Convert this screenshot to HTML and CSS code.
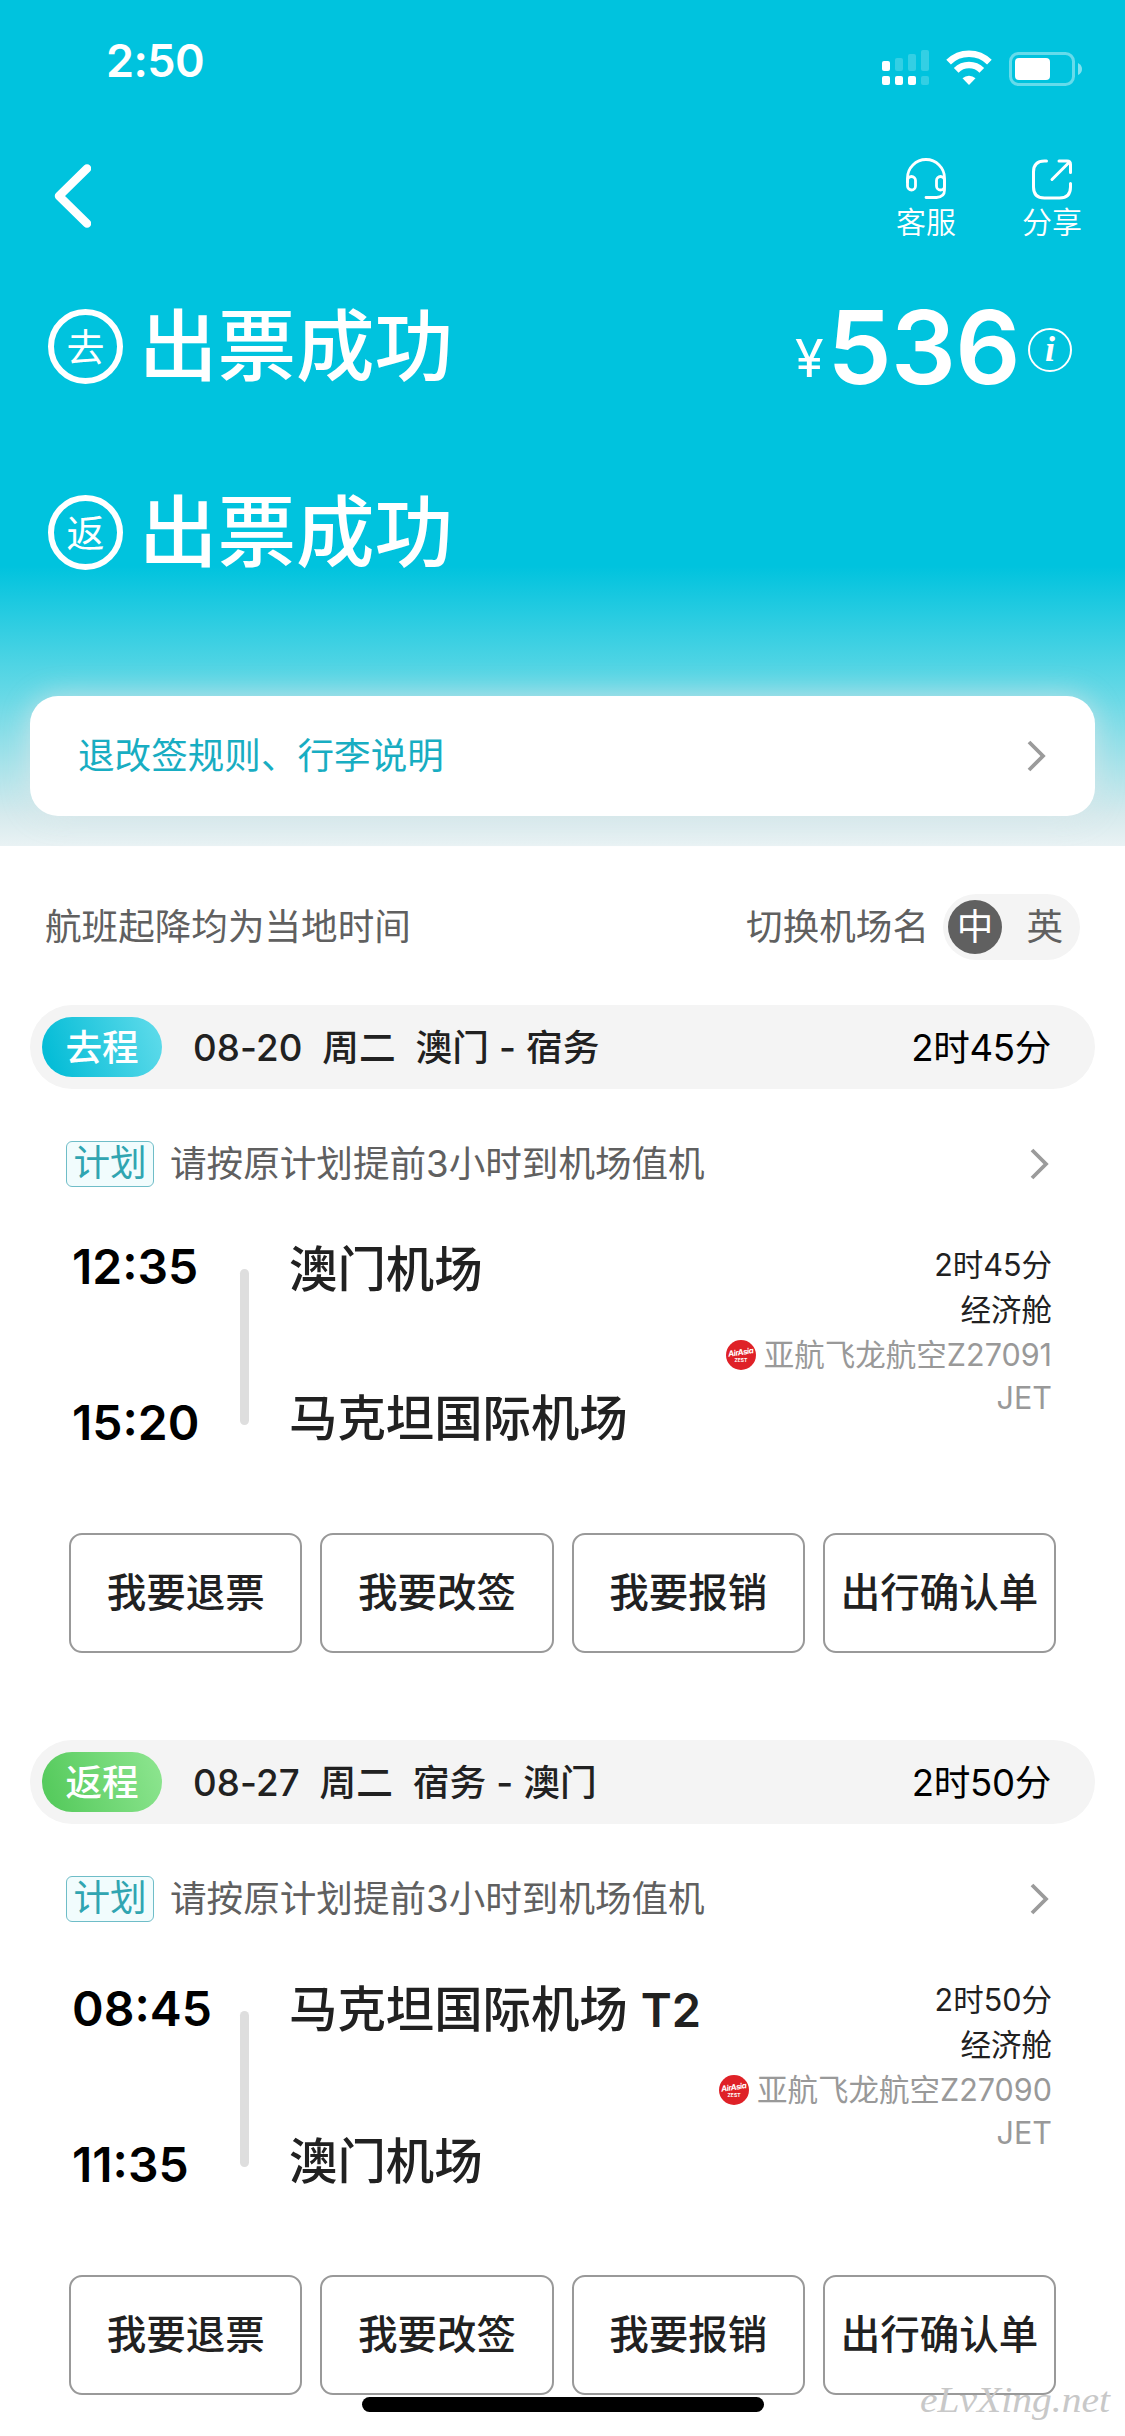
FILE: index.html
```html
<!DOCTYPE html>
<html lang="zh-CN">
<head>
<meta charset="utf-8">
<title>订单详情</title>
<link rel="stylesheet" href="styles.css">
</head>
<body>
<header class="hero">
  <div class="status">
    <span class="clock">2:50</span>
    <svg class="status-icons" width="201" height="36" viewBox="0 0 201 36" fill="#fff">
      <rect x="0" y="11" width="8" height="10" rx="2"/>
      <g opacity=".2"><rect x="13" y="8" width="8" height="13" rx="2"/><rect x="26" y="4" width="8" height="17" rx="2"/><rect x="39" y="0" width="8" height="21" rx="2"/><rect x="39" y="26" width="8" height="9" rx="2"/></g>
      <rect x="0" y="26" width="8" height="9" rx="2"/><rect x="13" y="26" width="8" height="9" rx="2"/><rect x="26" y="26" width="8" height="9" rx="2"/>
      <g fill="none" stroke="#fff" stroke-width="6.6"><path d="M66.6 12.2a29 29 0 0 1 40.8 0"/><path d="M74.2 20.4a18 18 0 0 1 25.6 0"/></g>
      <path d="M80.5 28.3a9.5 9.5 0 0 1 13 0L87 35z"/>
      <rect x="128.5" y="3.5" width="63" height="31" rx="8" fill="none" stroke="#fff" stroke-width="3" opacity=".4"/>
      <rect x="133" y="8" width="35" height="22" rx="4"/>
      <path d="M196 13q4 2 4 6t-4 6z" opacity=".5"/>
    </svg>
  </div>
  <nav class="nav">
    <svg class="back" width="40" height="66" viewBox="0 0 40 66"><path d="M36 5.5 8 33 36 60.5" fill="none" stroke="#fff" stroke-width="8.5" stroke-linecap="round" stroke-linejoin="round"/></svg>
    <div class="tools">
      <div class="tool">
        <svg width="42" height="42" viewBox="0 0 42 42" fill="none" stroke="#fff" stroke-width="2.8" stroke-linecap="round"><path d="M2.5 24V20a18.5 18.5 0 0 1 37 0v12q0 7-8 7.500H21"/><rect x="2.500" y="18.500" width="8" height="13.500" rx="4"/><rect x="31.500" y="18.500" width="8" height="13.500" rx="4"/></svg>
        <span>客服</span>
      </div>
      <div class="tool">
        <svg width="42" height="42" viewBox="0 0 42 42" fill="none" stroke="#fff" stroke-width="3" stroke-linecap="round" stroke-linejoin="round"><path d="M15.5 3h-2Q2.500 3 2.500 14v15q0 11 11 11h15q11 0 11-11v-3.500"/><path d="M21 21.500 38 4.500M28 3h8q3.500 0 3.500 3.500v8"/></svg>
        <span>分享</span>
      </div>
    </div>
  </nav>
  <div class="result">
    <span class="ring">去</span><h1>出票成功</h1>
    <div class="price"><span class="yen">¥</span><span class="amount">536</span><span class="info">i</span></div>
  </div>
  <div class="result"><span class="ring">返</span><h1>出票成功</h1></div>
  <a class="rules"><span>退改签规则、行李说明</span><svg class="chevron" viewBox="0 0 20 32"><path d="M2 2 16 16 2 30"/></svg></a>
</header>
<main>
  <div class="note">
    <span>航班起降均为当地时间</span>
    <span class="switch-label">切换机场名</span>
    <div class="switch"><b>中</b><span>英</span></div>
  </div>
  <section class="leg">
    <div class="leg-bar"><span class="pill out">去程</span><span class="route">08-20&nbsp; 周二&nbsp; 澳门 - 宿务</span><span class="total">2时45分</span></div>
    <div class="plan"><span class="tag">计划</span><span>请按原计划提前3小时到机场值机</span><svg class="chevron" viewBox="0 0 20 32"><path d="M2 2 16 16 2 30"/></svg></div>
    <div class="trip">
      <div class="times"><span>12:35</span><span>15:20</span></div>
      <i class="line"></i>
      <div class="airports"><span>澳门机场</span><span>马克坦国际机场</span></div>
      <div class="detail"><span>2时45分</span><span>经济舱</span>
        <span class="flight"><span class="airline"><span class="brand">AirAsia</span><span class="sub">ZEST</span></span>亚航飞龙航空Z27091</span>
        <span class="jet">JET</span></div>
    </div>
    <div class="actions"><button>我要退票</button><button>我要改签</button><button>我要报销</button><button>出行确认单</button></div>
  </section>
  <section class="leg return">
    <div class="leg-bar"><span class="pill back-pill">返程</span><span class="route">08-27&nbsp; 周二&nbsp; 宿务 - 澳门</span><span class="total">2时50分</span></div>
    <div class="plan"><span class="tag">计划</span><span>请按原计划提前3小时到机场值机</span><svg class="chevron" viewBox="0 0 20 32"><path d="M2 2 16 16 2 30"/></svg></div>
    <div class="trip">
      <div class="times"><span>08:45</span><span>11:35</span></div>
      <i class="line"></i>
      <div class="airports"><span>马克坦国际机场 <b>T2</b></span><span>澳门机场</span></div>
      <div class="detail"><span>2时50分</span><span>经济舱</span>
        <span class="flight"><span class="airline"><span class="brand">AirAsia</span><span class="sub">ZEST</span></span>亚航飞龙航空Z27090</span>
        <span class="jet">JET</span></div>
    </div>
    <div class="actions"><button>我要退票</button><button>我要改签</button><button>我要报销</button><button>出行确认单</button></div>
  </section>
</main>
<div class="home-indicator"></div>
<svg class="watermark" width="210" height="60" viewBox="0 0 210 60"><text x="5" y="38" textLength="190" lengthAdjust="spacingAndGlyphs">eLvXing.net</text></svg>
</body>
</html>
```
FILE: styles.css
```css
* { box-sizing: border-box; }
body {
  margin: 0;
  width: 1125px;
  height: 2436px;
  position: relative;
  overflow: hidden;
  background: #fff;
  color: #212121;
  font-family: Inter, "Noto Sans CJK SC", sans-serif;
  font-size: 36.6px;
  line-height: 1;
  white-space: nowrap;
}
svg { display: block; flex: none; }
.chevron {
  width: 20px;
  height: 32px;
  fill: none;
  stroke: #9b9b9b;
  stroke-width: 3.8;
}

/* header */
.hero {
  height: 846px;
  padding-top: 32px;
  color: #fff;
  background: linear-gradient(#00c3de 0, #00c3de 566px, #4fd4e4 665px, #6ad9e6 700px, #d6eaed 815px, #e9f2f4 846px);
}
.status {
  height: 68px;
  padding: 0 42px 0 106px;
  display: flex;
  justify-content: space-between;
}
.clock { font-size: 45px; font-weight: 600; line-height: 58px; letter-spacing: -.6px; }
.status-icons { margin-top: 18px; }
.nav {
  height: 166px;
  padding: 58px 43px 0 51px;
  display: flex;
  justify-content: space-between;
}
.back { margin-top: 5px; }
.tools { display: flex; gap: 66px; }
.tool {
  width: 60px;
  display: flex;
  flex-direction: column;
  align-items: center;
  font-size: 30px;
  font-weight: 350;
}
.tool span { line-height: 44px; }
.result {
  height: 161px;
  padding-left: 48px;
  display: flex;
  align-items: center;
}
.result + .result { margin-top: 25px; }
.ring {
  width: 75px;
  height: 75px;
  border: 6px solid #fff;
  border-radius: 50%;
  display: flex;
  align-items: center;
  justify-content: center;
  font-size: 38px;
}
h1 { margin: 1px 0 0 16px; font-size: 78.5px; font-weight: 500; line-height: 100px; }
.price {
  margin-left: auto;
  padding-right: 53px;
  display: flex;
  align-items: baseline;
}
.yen { position: relative; top: -7px; margin-right: 4px; font-size: 52px; font-weight: 400; }
.amount { font-size: 102px; font-weight: 600; letter-spacing: -.6px; }
.info {
  width: 44px;
  height: 44px;
  margin: 6px 0 0 8px;
  border: 2.5px solid #fff;
  border-radius: 50%;
  align-self: center;
  font: italic bold 36px/38px "Liberation Serif", serif;
  text-align: center;
}
.rules {
  height: 120px;
  margin: 83px 30px 0;
  padding: 0 48px;
  border-radius: 28px;
  background: #fff;
  box-shadow: 0 0 30px rgba(217, 230, 232, .8);
  color: #18adc2;
  display: flex;
  align-items: center;
  justify-content: space-between;
}

/* local time note and language switch */
.note {
  height: 159px;
  padding: 3px 45px 0 45px;
  display: flex;
  align-items: center;
  color: #606060;
}
.switch-label { margin-left: auto; }
.switch {
  width: 137px;
  height: 66px;
  margin-left: 14px;
  padding: 0 17px 0 5px;
  border-radius: 33px;
  background: #f4f4f4;
  display: flex;
  align-items: center;
  justify-content: space-between;
}
.switch b {
  width: 54px;
  height: 54px;
  border-radius: 50%;
  background: #606060;
  color: #fff;
  font-weight: 400;
  line-height: 54px;
  text-align: center;
}

/* one leg of the journey */
.leg { height: 735px; }
.leg-bar {
  height: 84px;
  margin: 0 30px;
  padding: 0 44px 0 12px;
  border-radius: 42px;
  background: #f4f4f4;
  display: flex;
  align-items: center;
}
.pill {
  width: 120px;
  height: 60px;
  border-radius: 30px;
  color: #fff;
  font-weight: 500;
  line-height: 62px;
  text-align: center;
}
.out { background: linear-gradient(70deg, #06bdd7 10%, #62dceb); }
.back-pill { background: linear-gradient(70deg, #57cb5e 10%, #8fe691); }
.route { margin-left: 31px; padding-top: 2px; font-size: 36.7px; font-weight: 500; letter-spacing: .1px; }
.total { margin-left: auto; padding-top: 2px; color: #000; letter-spacing: -.3px; }
.plan {
  height: 46px;
  margin: 52px 75px 0 66px;
  display: flex;
  align-items: center;
  gap: 16px;
  color: #606060;
}
.plan .chevron { margin-left: auto; }
.tag {
  width: 88px;
  height: 46px;
  border: 1.5px solid #6fbdc8;
  border-radius: 6px;
  background: #f1fcfd;
  color: #30a5b1;
  line-height: 43px;
  text-align: center;
}
.trip {
  height: 346px;
  padding: 52px 73px 0 72px;
  display: flex;
}
.times, .airports { display: flex; flex-direction: column; line-height: 54px; }
.times { width: 168px; gap: 102px; padding-top: 1px; font-size: 48px; font-weight: 600; color: #000; }
.line { width: 9px; height: 156px; margin-top: 30px; border-radius: 5px; background: #dedede; }
.airports { margin-left: 40px; gap: 95px; padding-top: 4px; font-size: 48.4px; font-weight: 500; }
.airports b { font-weight: 600; font-size: 47px; }
.detail {
  margin-left: auto;
  display: flex;
  flex-direction: column;
  align-items: flex-end;
  font-size: 30.5px;
  line-height: 45px;
  padding-top: 3px;
}
.flight { display: flex; align-items: center; gap: 8px; color: #999; }
.airline {
  width: 30px;
  height: 30px;
  border-radius: 50%;
  background: #df2127;
  color: #fff;
  display: flex;
  flex-direction: column;
  align-items: center;
  justify-content: center;
  font-weight: 700;
}
.brand { font-size: 8px; line-height: 10px; font-style: italic; letter-spacing: -.5px; transform: rotate(-8deg); }
.sub { font-size: 5px; line-height: 6px; }
.jet { color: #999; line-height: 42px; }
.actions {
  margin: 0 69px;
  display: grid;
  grid-template-columns: repeat(4, 1fr);
  gap: 18px;
}
.actions button {
  height: 120px;
  padding: 2px 0 0;
  border: 2px solid #999;
  border-radius: 13px;
  background: #fff;
  color: #212121;
  font: 500 39.5px/1 Inter, "Noto Sans CJK SC", sans-serif;
}
.return .times { padding-top: 8px; }
.return .line { margin-top: 37px; }
.return .airports { padding-top: 9px; gap: 98px; }
.return .trip { height: 353px; }

/* overlays */
.home-indicator {
  position: absolute;
  left: 362px;
  top: 2397px;
  width: 402px;
  height: 15px;
  border-radius: 8px;
  background: #000;
}
.watermark {
  position: absolute;
  left: 915px;
  top: 2374px;
  fill: #c8c8c8;
  font: italic 35px "Liberation Serif", serif;
}
```
